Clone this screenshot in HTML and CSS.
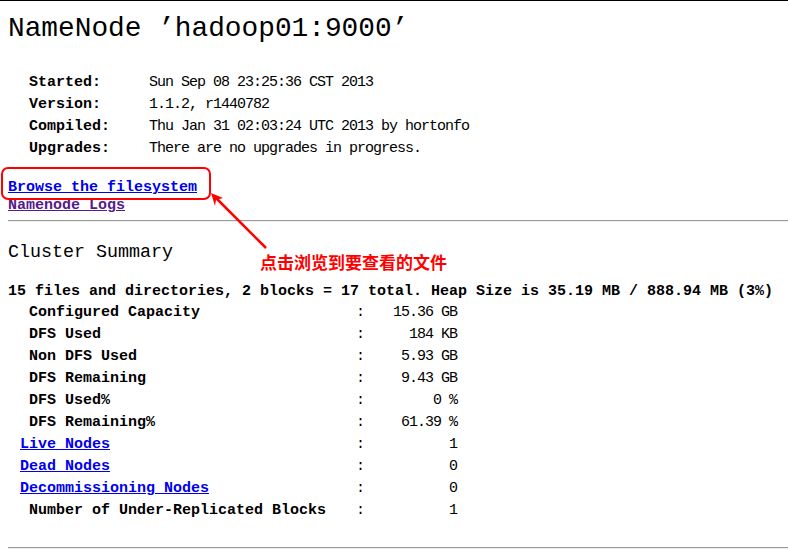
FILE: index.html
```html
<!DOCTYPE html>
<html lang="en">
<head>
   <meta charset="UTF-8">
   <title>Hadoop NameNode hadoop01:9000</title>
   <link rel="stylesheet" href="styles.css">
</head>
<body>
<h1 class="title">NameNode ’hadoop01:9000’</h1>

<div class="info">
   <span class="label">Started:</span><span>Sun Sep 08 23:25:36 CST 2013</span>
   <span class="label">Version:</span><span>1.1.2, r1440782</span>
   <span class="label">Compiled:</span><span>Thu Jan 31 02:03:24 UTC 2013 by hortonfo</span>
   <span class="label">Upgrades:</span><span>There are no upgrades in progress.</span>
</div>

<div class="links">
   <a href="#browse" class="link">Browse the filesystem</a>
   <a href="#logs" class="link visited">Namenode Logs</a>
</div>
<hr>

<h3 class="section">Cluster Summary</h3>
<p class="totals">15 files and directories, 2 blocks = 17 total. Heap Size is 35.19 MB / 888.94 MB (3%)</p>

<div class="summary">
   <span class="label">Configured Capacity</span><span class="colon">:</span><span class="value">15.36 GB</span>
   <span class="label">DFS Used</span><span class="colon">:</span><span class="value">184 KB</span>
   <span class="label">Non DFS Used</span><span class="colon">:</span><span class="value">5.93 GB</span>
   <span class="label">DFS Remaining</span><span class="colon">:</span><span class="value">9.43 GB</span>
   <span class="label">DFS Used%</span><span class="colon">:</span><span class="value">0 %</span>
   <span class="label">DFS Remaining%</span><span class="colon">:</span><span class="value">61.39 %</span>
   <a href="#live" class="link">Live Nodes</a><span class="colon">:</span><span class="value">1</span>
   <a href="#dead" class="link">Dead Nodes</a><span class="colon">:</span><span class="value">0</span>
   <a href="#decom" class="link">Decommissioning Nodes</a><span class="colon">:</span><span class="value">0</span>
   <span class="label">Number of Under-Replicated Blocks</span><span class="colon">:</span><span class="value">1</span>
</div>
<hr class="bottom">

<!-- annotation drawn over the screenshot -->
<svg class="marks" width="788" height="551" viewBox="0 0 788 551">
   <rect x="2" y="167" width="208" height="31" rx="6" ry="6" fill="none" stroke="#ff0000" stroke-width="2"/>
   <line x1="266" y1="247" x2="215" y2="196" stroke="#ff0000" stroke-width="2.5"/>
   <polygon points="211,192 223,197 216,199 215,205" fill="#ff0000"/>
</svg>
<span class="note">点击浏览到要查看的文件</span>
</body>
</html>
```

FILE: styles.css
```css
body {
   margin: 0;
   padding: 8px;
   border-top: 1px solid #000;
   font-family: "Liberation Mono", "Noto Sans CJK SC", monospace;
   font-size: 15px;
   letter-spacing: -1px;
   color: #000;
   background-color: #fff;
   position: relative;
}
.title {
   margin: 0;
   font-size: 27.8px;
   line-height: 40px;
   font-weight: normal;
   letter-spacing: 0;
}
.info {
   display: grid;
   grid-template-columns: 120px auto;
   margin-top: 23px;
   padding-left: 21px;
   line-height: 22px;
   white-space: pre;
}
.label {
   font-weight: bold;
   letter-spacing: 0;
}
.links {
   display: flex;
   flex-direction: column;
   align-items: flex-start;
   margin-top: 19px;
   line-height: 18px;
}
.link {
   color: #0000ee;
   font-weight: bold;
   letter-spacing: 0;
}
.link.visited {
   color: #551a8b;
}
hr {
   margin: 5px -8px 0 0;
   border: none;
   border-top: 1px solid #9a9a9a;
   border-bottom: 1px solid #eeeeee;
   height: 0;
}
.section {
   margin: 19px 0 0;
   font-size: 18.33px;
   line-height: 24px;
   font-weight: normal;
   letter-spacing: 0;
}
.totals {
   margin: 17px 0 0;
   line-height: 20px;
   font-weight: bold;
   letter-spacing: 0;
   white-space: pre;
}
.summary {
   display: grid;
   grid-template-columns: 336px 24px 77px;
   padding-left: 12px;
   line-height: 22px;
   white-space: pre;
}
.summary .label {
   padding-left: 9px;
}
.summary .link {
   justify-self: start;
}
.value {
   text-align: right;
}
hr.bottom {
   margin-top: 25px;
}
.marks {
   position: absolute;
   left: 0;
   top: 0;
   pointer-events: none;
}
.note {
   position: absolute;
   left: 260px;
   top: 251px;
   font-family: "Noto Sans CJK SC", sans-serif;
   font-size: 17px;
   line-height: 20px;
   font-weight: bold;
   letter-spacing: 0;
   color: #ff0000;
}
```
